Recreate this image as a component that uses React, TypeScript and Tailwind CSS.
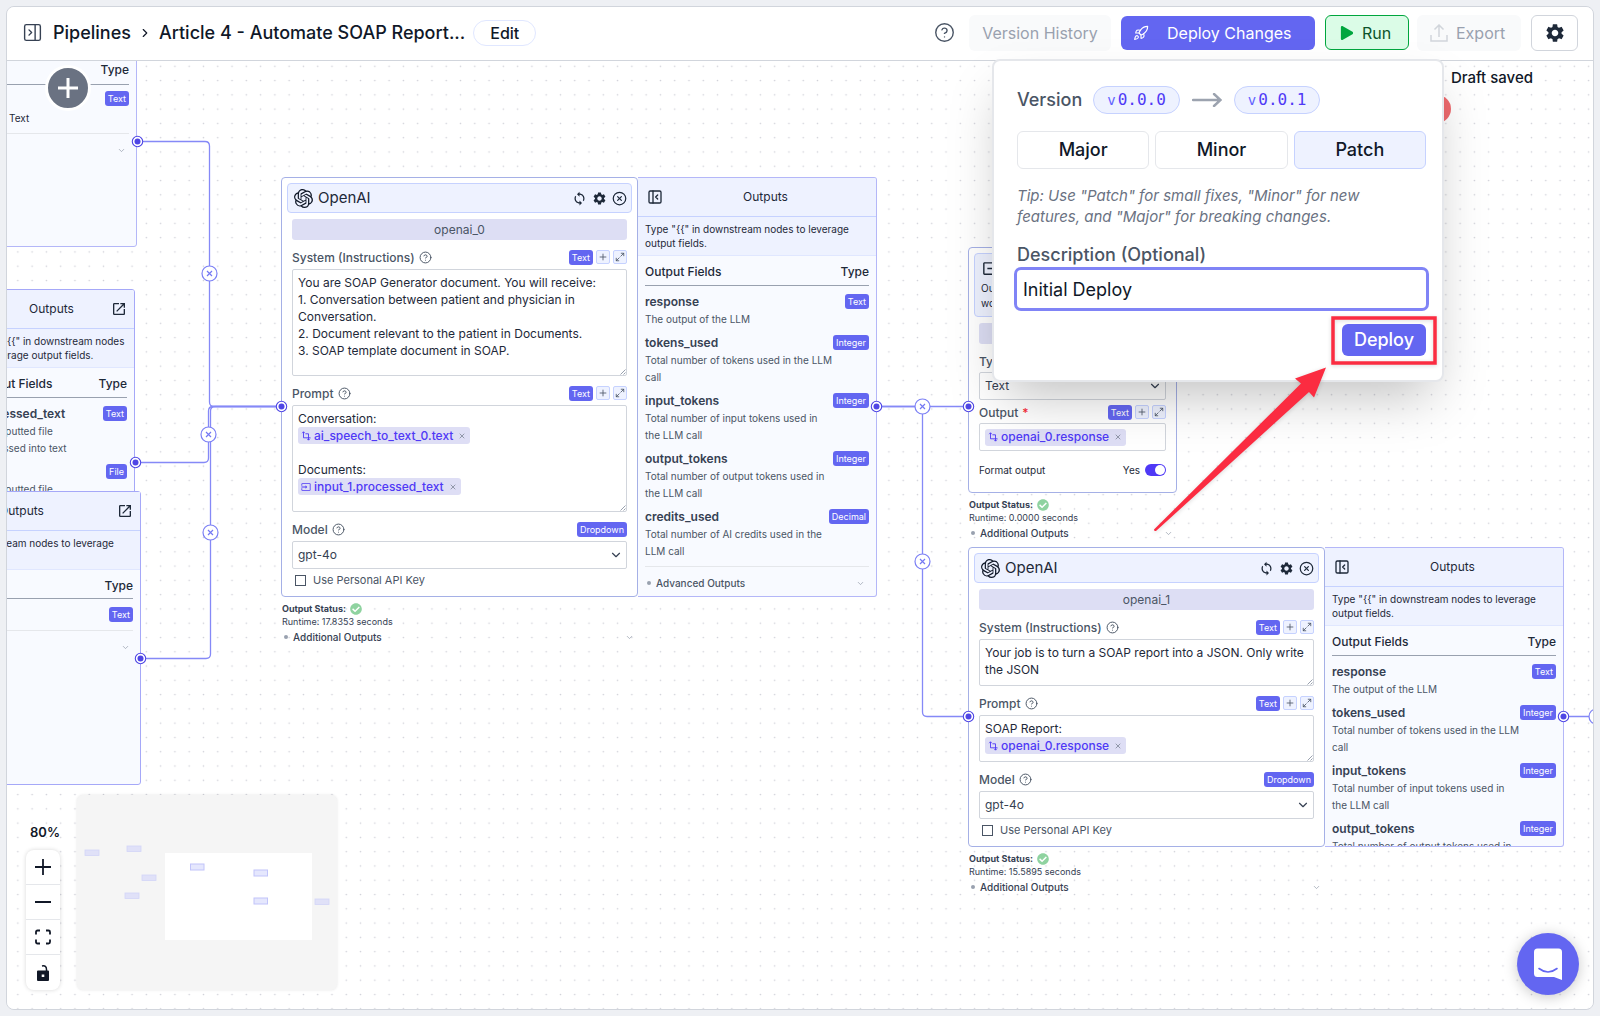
import type { ReactNode } from "react";
import {
    ChevronDown,
    ChevronRight,
    CircleHelp,
    CircleX,
    Maximize2,
    PanelLeftClose,
    PanelRightClose,
    Plus,
    Rocket,
    X,
} from "lucide-react";
import { FaCheckCircle, FaPlay } from "react-icons/fa";
import { MdInput, MdOpenInNew, MdOutput, MdSettings, MdSync } from "react-icons/md";
import { SiOpenai } from "react-icons/si";

type Field = { name: string; type: string; description: string };

const llmFields: Field[] = [
    { name: "response", type: "Text", description: "The output of the LLM" },
    {
        name: "tokens_used",
        type: "Integer",
        description: "Total number of tokens used in the LLM call",
    },
    {
        name: "input_tokens",
        type: "Integer",
        description: "Total number of input tokens used in the LLM call",
    },
    {
        name: "output_tokens",
        type: "Integer",
        description: "Total number of output tokens used in the LLM call",
    },
    {
        name: "credits_used",
        type: "Decimal",
        description: "Total number of AI credits used in the LLM call",
    },
];

const fileFields: Field[] = [
    {
        name: "processed_text",
        type: "Text",
        description: "The inputted file processed into text",
    },
    { name: "file", type: "File", description: "The inputted file" },
];

const edges = [
    "M130.5 80.5 H198 Q202.5 80.5 202.5 85 V341 Q202.5 345.5 207 345.5 H274",
    "M128.5 401.5 H197 Q201.5 401.5 201.5 397 V350 Q201.5 345.5 206 345.5 H274",
    "M133.5 597.5 H199 Q203.5 597.5 203.5 593 V350 Q203.5 345.5 208 345.5 H274",
    "M869.5 345.5 H961",
    "M869.5 345.5 H911 Q915.5 345.5 915.5 350 V651 Q915.5 655.5 920 655.5 H961",
    "M1556.5 655.5 H1590",
];

const edgeButtons = [
    [202, 212],
    [201, 373],
    [203, 471],
    [915, 345],
    [915, 500],
    [1589, 655],
];

const handles = [
    [130, 80],
    [128, 401],
    [133, 597],
    [274, 345],
    [869, 345],
    [961, 345],
    [961, 655],
    [1556, 655],
];

function Badge({ children }: { children: ReactNode }) {
    return (
        <span className="flex h-[15px] items-center rounded-[3px] bg-[#6366f1] px-[3px] text-[9px] leading-none text-white">
            {children}
        </span>
    );
}

function FieldLabel({
    htmlFor,
    id,
    text,
    badge,
    required,
    tools,
}: {
    htmlFor?: string;
    id?: string;
    text: string;
    badge: string;
    required?: boolean;
    tools?: boolean;
}) {
    return (
        <div className="flex h-[15px] items-center justify-between">
            <div className="flex items-center gap-1 text-xs font-medium text-gray-600">
                <label htmlFor={htmlFor} id={id}>
                    {text}
                    {required && <span className="ml-1 text-red-500">*</span>}
                </label>
                {!required && <CircleHelp size={13} strokeWidth={1.8} />}
            </div>
            <div className="flex gap-[3px]">
                <Badge>{badge}</Badge>
                {tools && (
                    <>
                        <button
                            aria-label="Add variable"
                            className="flex size-[14px] items-center justify-center rounded-[2px] border border-indigo-200 bg-indigo-50 text-gray-600"
                        >
                            <Plus size={10} strokeWidth={2} />
                        </button>
                        <button
                            aria-label="Expand"
                            className="flex size-[14px] items-center justify-center rounded-[2px] border border-indigo-200 bg-indigo-50 text-gray-600"
                        >
                            <Maximize2 size={10} strokeWidth={2} />
                        </button>
                    </>
                )}
            </div>
        </div>
    );
}

function Grip() {
    return (
        <svg
            className="pointer-events-none absolute right-px bottom-px text-gray-400"
            width="6"
            height="6"
            stroke="currentColor"
        >
            <path d="M0.5 5.5 L5.5 0.5 M3.5 5.5 L5.5 3.5" />
        </svg>
    );
}

function Chip({ text, input }: { text: string; input?: boolean }) {
    return (
        <span className="inline-flex h-[17px] items-center rounded-[3px] bg-[#dedef5] pr-1 pl-[3px] font-medium text-indigo-600">
            {input ? (
                <MdInput size={10} />
            ) : (
                <svg width="10" height="10" viewBox="0 0 10 10" fill="none" stroke="currentColor" strokeWidth="0.9">
                    <path d="M2.5 0.8 V6.8 H9.5 M4.5 2.8 H7.5 V9 M6.2 7.8 L7.5 9.2 L8.8 7.8 M1.2 2.2 L2.5 0.8 L3.8 2.2" />
                </svg>
            )}
            <span className="ml-[3px]">{text}</span>
            <X size={8} strokeWidth={2} className="ml-[5px] text-gray-500" />
        </span>
    );
}

function Select({ id, value }: { id: string; value: string }) {
    return (
        <div className="relative">
            <select
                id={id}
                defaultValue={value}
                className="block h-7 w-full appearance-none rounded-[2px] border border-gray-300 bg-white px-[5px] text-xs text-gray-700"
            >
                <option>{value}</option>
            </select>
            <ChevronDown
                size={14}
                strokeWidth={2}
                className="pointer-events-none absolute top-[7px] right-1 text-gray-700"
            />
        </div>
    );
}

function NodeStatus({ runtime }: { runtime: string }) {
    return (
        <div className="mt-[5px] pl-px text-[9px] text-gray-700">
            <div className="flex h-[14px] items-center gap-1 font-bold">
                Output Status: <FaCheckCircle size={12} className="text-[#8fd3a0]" />
            </div>
            <div className="h-3 leading-3">Runtime: {runtime} seconds</div>
            <div className="flex h-[18px] items-center text-[10px] font-medium">
                <span className="mr-[5px] ml-[2px] size-1 rounded-full bg-gray-400" />
                Additional Outputs
                <ChevronDown size={9} className="mr-1 ml-auto text-gray-400" />
            </div>
        </div>
    );
}

function FieldTable({ fields }: { fields: Field[] }) {
    return (
        <table className="mx-[7px] w-[calc(100%-14px)] table-fixed text-left">
            <thead>
                <tr className="h-[29px] border-b border-gray-400 text-xs text-gray-800">
                    <th className="pt-1 font-medium whitespace-nowrap">Output Fields</th>
                    <th className="w-9 pt-1 text-right font-medium">Type</th>
                </tr>
            </thead>
            <tbody>
                {fields.map((field, i) => (
                    <tr key={field.name} className="align-top">
                        <td className={i === 0 ? "pt-[7px] pb-[6px]" : "pb-[6px]"}>
                            <div className="text-xs leading-[18px] font-semibold text-gray-700">
                                {field.name}
                            </div>
                            <div className="text-[10px] leading-[17px] text-gray-600">
                                {field.description}
                            </div>
                        </td>
                        <td className={i === 0 ? "pt-2" : "pt-px"}>
                            <div className="flex justify-end">
                                <Badge>{field.type}</Badge>
                            </div>
                        </td>
                    </tr>
                ))}
            </tbody>
        </table>
    );
}

function OutputsHeader({ collapsible }: { collapsible?: boolean }) {
    return collapsible ? (
        <div className="flex h-[39px] items-center border-b border-indigo-200 bg-[#eef2ff] pr-2 pl-[9px]">
            <button aria-label="Collapse outputs">
                <PanelLeftClose size={16} strokeWidth={2} />
            </button>
            <h3 className="flex-1 text-center text-xs">Outputs</h3>
        </div>
    ) : (
        <div className="grid h-[39px] grid-cols-[20px_1fr_20px] items-center border-b border-indigo-200 bg-[#eef2ff] px-[7px]">
            <h3 className="col-start-2 text-center text-xs">Outputs</h3>
            <button aria-label="Expand outputs" className="justify-self-end">
                <MdOpenInNew size={16} />
            </button>
        </div>
    );
}

function OutputsHint() {
    return (
        <p className="h-[39px] border-b border-indigo-100 bg-[#eef2ff] px-[7px] pt-[5px] text-[10px] leading-[14px]">
            Type "{"{{"}" in downstream nodes to leverage output fields.
        </p>
    );
}

function OpenAiNode({
    name,
    system,
    runtime,
    className,
    editorClass,
    children,
}: {
    name: string;
    system: string;
    runtime: string;
    className: string;
    editorClass: string;
    children: ReactNode;
}) {
    return (
        <article className={`absolute w-[596px] text-gray-800 ${className}`}>
            <div className="flex">
                <section className="w-[357px] rounded-[4px] border border-[#a5b0e6] bg-white p-[5px] pb-2">
                    <header className="flex h-[30px] items-center rounded-[4px] border border-indigo-200 bg-[#eef2ff] pr-1 pl-[6px]">
                        <SiOpenai size={19} className="text-gray-900" />
                        <h2 className="ml-[5px] flex-1 text-[15px]">OpenAI</h2>
                        <div className="flex items-center gap-[5px]">
                            <button aria-label="Refresh">
                                <MdSync size={15} />
                            </button>
                            <button aria-label="Settings">
                                <MdSettings size={15} />
                            </button>
                            <button aria-label="Remove">
                                <CircleX size={15} strokeWidth={2} />
                            </button>
                        </div>
                    </header>
                    <div className="mt-[6px] px-[5px]">
                        <div className="mb-[10px] h-[21px] rounded-[3px] bg-[#dddef4] text-center text-xs leading-[21px] text-gray-600">
                            {name}
                        </div>
                        <FieldLabel
                            htmlFor={`${name}-system`}
                            text="System (Instructions)"
                            badge="Text"
                            tools
                        />
                        <div className="relative mt-1 mb-[10px]">
                            <textarea
                                id={`${name}-system`}
                                defaultValue={system}
                                className={`block w-full resize-none overflow-hidden rounded-[2px] border border-gray-300 px-[5px] py-1 text-xs leading-[17px] ${editorClass}`}
                            />
                            <Grip />
                        </div>
                        <FieldLabel id={`${name}-prompt`} text="Prompt" badge="Text" tools />
                        <div className="relative mt-1 mb-[10px]">
                            <div
                                role="textbox"
                                aria-labelledby={`${name}-prompt`}
                                tabIndex={0}
                                className={`rounded-[2px] border border-gray-300 px-[5px] py-1 text-xs leading-[17px] ${editorClass}`}
                            >
                                {children}
                            </div>
                            <Grip />
                        </div>
                        <FieldLabel htmlFor={`${name}-model`} text="Model" badge="Dropdown" />
                        <div className="mt-1">
                            <Select id={`${name}-model`} value="gpt-4o" />
                        </div>
                        <label className="mt-[3px] flex h-4 items-center gap-[7px] pl-[3px] text-[11px] text-gray-600">
                            <input
                                type="checkbox"
                                className="size-[11px] appearance-none border border-gray-600 bg-white"
                            />
                            Use Personal API Key
                        </label>
                    </div>
                </section>
                <aside className="flex-1 overflow-hidden rounded-r-[3px] border border-l-0 border-[#b4b7f8] bg-[#f8faff] contain-size">
                    <OutputsHeader collapsible />
                    <OutputsHint />
                    <FieldTable fields={llmFields} />
                    <div className="mx-[7px] flex h-[34px] items-center border-t border-gray-200 pl-[2px] text-[10px] font-medium text-gray-600">
                        <span className="mr-[5px] size-1 rounded-full bg-gray-400" />
                        Advanced Outputs
                        <ChevronDown size={9} className="mr-1 ml-auto text-gray-400" />
                    </div>
                </aside>
            </div>
            <div className="w-[357px]">
                <NodeStatus runtime={runtime} />
            </div>
        </article>
    );
}

function OutputNode() {
    return (
        <article className="absolute top-[186px] left-[961px] w-[209px] text-gray-800">
            <section className="rounded-[4px] border border-[#a5b0e6] bg-white p-[5px] pb-[14px]">
                <header className="h-[64px] rounded-[4px] border border-indigo-200 bg-[#eef2ff] px-[6px] pt-[5px]">
                    <h2 className="flex items-center gap-[5px] text-[15px] leading-[18px]">
                        <MdOutput size={17} /> Output
                    </h2>
                    <p className="mt-1 text-[10px] leading-[15px]">
                        Output different data types from your workflow.
                    </p>
                </header>
                <div className="mt-[6px] px-[5px]">
                    <div className="h-[21px] rounded-[3px] bg-[#dddef4] text-center text-xs leading-[21px] text-gray-600">
                        output_0
                    </div>
                    <div className="mt-[10px]">
                        <FieldLabel htmlFor="output-type" text="Type" badge="Dropdown" />
                    </div>
                    <div className="mt-[3px]">
                        <Select id="output-type" value="Text" />
                    </div>
                    <div className="mt-[5px]">
                        <FieldLabel id="output-value" text="Output" badge="Text" required tools />
                    </div>
                    <div
                        role="textbox"
                        aria-labelledby="output-value"
                        tabIndex={0}
                        className="mt-[3px] flex h-[28px] items-center rounded-[2px] border border-gray-300 px-[5px] text-xs"
                    >
                        <Chip text="openai_0.response" />
                    </div>
                    <label className="mt-[11px] flex h-4 items-center text-[10px]">
                        Format output
                        <span className="ml-auto">Yes</span>
                        <input
                            type="checkbox"
                            role="switch"
                            defaultChecked
                            className="ml-[5px] flex h-3 w-[21px] appearance-none items-center justify-end rounded-full bg-indigo-600 px-px after:size-[10px] after:rounded-full after:bg-white after:content-['']"
                        />
                    </label>
                </div>
            </section>
            <NodeStatus runtime="0.0000" />
        </article>
    );
}

function SidePanels() {
    return (
        <>
            <aside className="absolute top-[-60px] left-[-109px] h-[246px] w-[239px] rounded-[3px] border border-[#b4b7f8] bg-[#f8faff] px-[7px] pt-[58px] text-gray-800">
                <div className="flex h-[25px] items-center justify-end border-b border-gray-400 pb-1 text-xs font-medium">
                    Type
                </div>
                <div className="mt-[6px] flex justify-end">
                    <Badge>Text</Badge>
                </div>
                <p className="mt-1 h-6 border-b border-gray-200 pl-[103px] text-[10px] leading-4">Text</p>
                <ChevronDown size={9} className="mt-3 mr-[3px] ml-auto text-gray-400" />
            </aside>
            <aside className="absolute top-[228px] left-[-39px] h-[203px] w-[167px] overflow-hidden rounded-t-[3px] border border-[#a5a8f8] bg-[#f8faff] text-gray-800">
                <OutputsHeader />
                <OutputsHint />
                <FieldTable fields={fileFields} />
            </aside>
            <aside className="absolute top-[430px] left-[-105px] h-[294px] w-[239px] rounded-[3px] border border-[#a5a8f8] bg-[#f8faff] text-gray-800">
                <OutputsHeader />
                <OutputsHint />
                <div className="mx-[7px] flex h-[29px] items-center justify-end border-b border-gray-400 pt-1 text-xs font-medium">
                    Type
                </div>
                <div className="mx-[7px] flex h-8 items-center justify-end border-b border-gray-200">
                    <Badge>Text</Badge>
                </div>
                <ChevronDown size={9} className="mt-3 mr-[10px] ml-auto text-gray-400" />
            </aside>
        </>
    );
}

function Connections() {
    return (
        <svg className="pointer-events-none absolute inset-0 size-full" fill="none">
            {edges.map((d) => (
                <path key={d} d={d} stroke="#8589f7" strokeWidth="1.3" />
            ))}
            {edgeButtons.map(([x, y]) => (
                <g key={`${x}-${y}`} transform={`translate(${x + 0.5} ${y + 0.5})`}>
                    <circle r="7.5" fill="white" stroke="#7c80f5" strokeWidth="1.2" />
                    <path d="M-2.5 -2.5 L2.5 2.5 M2.5 -2.5 L-2.5 2.5" stroke="#7478f3" strokeWidth="1.2" />
                </g>
            ))}
            {handles.map(([x, y]) => (
                <g key={`${x}-${y}`} transform={`translate(${x + 0.5} ${y + 0.5})`}>
                    <circle r="5.2" fill="white" stroke="#4f46e5" strokeWidth="1.1" />
                    <circle r="3" fill="#4f46e5" />
                </g>
            ))}
        </svg>
    );
}

function Controls() {
    return (
        <div className="absolute bottom-[19px] left-[19px] flex items-end gap-[17px]">
            <div>
                <div className="mb-[10px] pl-1 text-[13px] leading-4 font-semibold text-gray-900">80%</div>
                <div className="flex w-[34px] flex-col divide-y divide-gray-200 overflow-hidden rounded-lg bg-white shadow-[0_0_4px_rgba(0,0,0,0.16)]">
                    <button aria-label="Zoom in" className="flex h-[35px] items-center justify-center">
                        <svg width="16" height="16" stroke="#111827" strokeWidth="1.8">
                            <path d="M0 8 H16 M8 0 V16" />
                        </svg>
                    </button>
                    <button aria-label="Zoom out" className="flex h-[35px] items-center justify-center">
                        <svg width="16" height="16" stroke="#111827" strokeWidth="1.8">
                            <path d="M0 8 H16" />
                        </svg>
                    </button>
                    <button aria-label="Fit view" className="flex h-[35px] items-center justify-center">
                        <svg width="16" height="16" fill="none" stroke="#111827" strokeWidth="1.8">
                            <path d="M1 5.5 V3 Q1 1.5 2.5 1.5 H5 M11 1.5 H13.5 Q15 1.5 15 3 V5.5 M15 10.5 V13 Q15 14.5 13.5 14.5 H11 M5 14.5 H2.5 Q1 14.5 1 13 V10.5" />
                        </svg>
                    </button>
                    <button aria-label="Lock" className="flex h-[35px] items-center justify-center">
                        <svg width="14" height="16" viewBox="0 0 14 16">
                            <path d="M6 1 Q10.5 0 10.5 4.5 V6" fill="none" stroke="#111827" strokeWidth="1.5" />
                            <path
                                fillRule="evenodd"
                                fill="#111827"
                                d="M2 5.5 H12 Q13 5.5 13 6.5 V15 Q13 16 12 16 H2 Q1 16 1 15 V6.5 Q1 5.5 2 5.5 Z M5.7 9.4 V12 H8.3 V9.4 Z"
                            />
                        </svg>
                    </button>
                </div>
            </div>
            <svg
                width="260"
                height="195"
                className="rounded-md bg-[#f5f5f5] shadow-[0_0_3px_rgba(0,0,0,0.1)]"
            >
                <rect x="88" y="58" width="147" height="87" fill="white" />
                <g fill="#e0e1f8" stroke="#d3d5f7" strokeWidth="0.8">
                    <rect x="8" y="55" width="14" height="5.5" />
                    <rect x="50" y="51" width="14" height="5.5" />
                    <rect x="65" y="80" width="14" height="5.5" />
                    <rect x="48" y="98" width="14" height="5.5" />
                    <rect x="238" y="104" width="14" height="5.5" />
                </g>
                <g fill="#e5e7fd" stroke="#c1c4fa" strokeWidth="1">
                    <rect x="113.5" y="69" width="13.5" height="6" />
                    <rect x="177" y="75" width="13.5" height="6" />
                    <rect x="177" y="103" width="13.5" height="6" />
                </g>
            </svg>
        </div>
    );
}

function Canvas() {
    return (
        <div className="relative flex-1 overflow-hidden bg-white">
            <svg className="absolute inset-0 size-full">
                <pattern
                    id="dots"
                    x="3.7"
                    y="-1.9"
                    width="14.28"
                    height="14.28"
                    patternUnits="userSpaceOnUse"
                >
                    <circle cx="7.14" cy="7.14" r="0.8" fill="#cfd0d8" />
                </pattern>
                <rect width="100%" height="100%" fill="url(#dots)" />
            </svg>
            <SidePanels />
            <OpenAiNode
                className="top-[116px] left-[274px]"
                name="openai_0"
                runtime="17.8353"
                editorClass="h-[107px]"
                system={
                    "You are SOAP Generator document. You will receive:\n1. Conversation between patient and physician in Conversation.\n2. Document relevant to the patient in Documents.\n3. SOAP template document in SOAP."
                }
            >
                <div>Conversation:</div>
                <div className="flex">
                    <Chip text="ai_speech_to_text_0.text" />
                </div>
                <div className="mt-[17px]">Documents:</div>
                <div className="flex">
                    <Chip text="input_1.processed_text" input />
                </div>
            </OpenAiNode>
            <OutputNode />
            <OpenAiNode
                className="top-[486px] left-[961px]"
                name="openai_1"
                runtime="15.5895"
                editorClass="h-[47px]"
                system="Your job is to turn a SOAP report into a JSON. Only write the JSON"
            >
                <div>SOAP Report:</div>
                <div className="flex">
                    <Chip text="openai_0.response" />
                </div>
            </OpenAiNode>
            <Connections />
            <button
                aria-label="Add node"
                className="absolute top-[4px] left-[38px] flex size-[46px] items-center justify-center rounded-full border-[3px] border-white bg-gray-500"
            >
                <svg width="20" height="20" stroke="white" strokeWidth="3">
                    <path d="M0 10 H20 M10 0 V20" />
                </svg>
            </button>
            <Controls />
            <span className="absolute top-[34px] right-[142px] size-[28px] rounded-full bg-[#ef6a6e]" />
            <p className="absolute top-[7px] right-[60px] text-[15px] leading-5 font-medium text-gray-900">
                Draft saved
            </p>
            <button
                aria-label="Open chat"
                className="absolute right-[14px] bottom-[14px] flex size-[62px] items-center justify-center rounded-full bg-[#6366f1] shadow-[0_2px_14px_rgba(0,0,0,0.22)]"
            >
                <svg width="28" height="32" viewBox="0 0 28 32">
                    <path
                        fill="white"
                        d="M3.5 0.5 H24.5 Q28 0.5 28 4 V32 L20 29 H3.5 Q0 29 0 25.5 V4 Q0 0.5 3.5 0.5 Z"
                    />
                    <path
                        d="M5 20.5 Q14 27.5 23 20.5"
                        fill="none"
                        stroke="#6366f1"
                        strokeWidth="1.6"
                        strokeLinecap="round"
                    />
                </svg>
            </button>
        </div>
    );
}

function VersionPill({ version }: { version: string }) {
    return (
        <span className="flex h-7 items-center gap-[2px] rounded-full border border-indigo-200 bg-indigo-50 px-[13px] font-['DejaVu_Sans_Mono',monospace] text-base text-indigo-600">
            <span className="text-sm text-indigo-500">v</span>
            {version}
        </span>
    );
}

function DeployPopover() {
    return (
        <div
            role="dialog"
            aria-label="Deploy changes"
            className="absolute top-[52px] right-[149px] z-20 w-[452px] rounded-lg border-2 border-gray-200 bg-white pt-[25px] pr-4 pb-6 pl-[23px] text-lg text-gray-900 shadow-2xl"
        >
            <div className="flex items-center">
                <span className="mr-[11px] font-medium text-gray-600">Version</span>
                <VersionPill version="0.0.0" />
                <svg className="mx-3" width="30" height="14" fill="none" stroke="#9ca3af" strokeWidth="2.4">
                    <path d="M1 7 H28 M22 1 L28.5 7 L22 13" strokeLinecap="round" />
                </svg>
                <VersionPill version="0.0.1" />
            </div>
            <div className="mt-[17px] grid grid-cols-3 gap-[6px] font-medium">
                <button className="h-[38px] rounded-md border border-gray-200">Major</button>
                <button className="h-[38px] rounded-md border border-gray-200">Minor</button>
                <button className="h-[38px] rounded-md border border-indigo-200 bg-[#eef2ff]">Patch</button>
            </div>
            <p className="mt-4 w-[360px] text-[15px] leading-[21px] text-gray-500 italic">
                Tip: Use "Patch" for small fixes, "Minor" for new features, and "Major" for breaking changes.
            </p>
            <label htmlFor="description" className="mt-4 block leading-6 font-medium text-gray-600">
                Description (Optional)
            </label>
            <input
                id="description"
                defaultValue="Initial Deploy"
                className="mt-[3px] block h-[38px] w-full rounded-[4px] bg-white px-[6px] ring-[3px] ring-[#8084f6] outline-none"
            />
            <div className="mt-4 flex justify-end">
                <button className="h-8 rounded-md bg-[#6366f1] px-3 font-medium text-white">Deploy</button>
            </div>
            <svg
                className="pointer-events-none absolute top-0 left-0 overflow-visible drop-shadow-sm"
                width="448"
                height="318"
            >
                <rect x="339" y="257" width="102" height="45" fill="none" stroke="#fb2c41" strokeWidth="3.5" />
                <path
                    fill="#fb2c41"
                    d="M160 468.5 L307 322.5 L301 317.5 L332 306.5 L320 336.5 L315 331 L162 470 Q160 470.5 160 468.5 Z"
                />
            </svg>
        </div>
    );
}

function Header() {
    return (
        <header className="flex h-[54px] shrink-0 items-center border-b border-gray-300 bg-white pr-[15px] pb-[2px] pl-[15px] text-base text-gray-900">
            <button aria-label="Open sidebar">
                <PanelRightClose size={21} strokeWidth={1.6} className="text-gray-700" />
            </button>
            <nav className="ml-[10px] flex items-center text-lg font-medium">
                <a href="#pipelines">Pipelines</a>
                <ChevronRight size={14} className="mx-[7px]" />
                <span>Article 4 - Automate SOAP Report...</span>
            </nav>
            <button className="ml-2 h-[26px] rounded-full border border-indigo-100 px-4 font-medium">
                Edit
            </button>
            <div className="ml-auto flex items-center">
                <button aria-label="Help">
                    <CircleHelp size={21} strokeWidth={1.6} className="text-gray-600" />
                </button>
                <button disabled className="ml-[14px] h-9 w-[142px] rounded-md bg-gray-50 text-gray-400">
                    Version History
                </button>
                <button className="ml-[10px] flex h-[34px] w-[194px] items-center rounded-md bg-[#6366f1] text-white">
                    <Rocket size={16} strokeWidth={1.7} className="ml-3" />
                    <span className="ml-[18px]">Deploy Changes</span>
                </button>
                <button className="ml-[10px] flex h-[35px] w-[84px] items-center rounded-md border border-green-600 bg-green-100 pl-[14px] text-green-900">
                    <FaPlay size={14} className="mr-2 text-green-600" />
                    Run
                </button>
                <button
                    disabled
                    className="ml-2 flex h-9 w-[104px] items-center rounded-md bg-gray-50 pl-[13px] text-gray-400"
                >
                    <svg
                        width="18"
                        height="18"
                        fill="none"
                        stroke="#d1d5db"
                        strokeWidth="1.5"
                        className="mr-2"
                    >
                        <path d="M1 11 V17 H17 V11 M9 13 V1.5 M4.5 5.5 L9 1 L13.5 5.5" />
                    </svg>
                    Export
                </button>
                <button
                    aria-label="Settings"
                    className="ml-[10px] flex h-9 w-[47px] items-center justify-center rounded-md border border-gray-300 text-gray-800"
                >
                    <MdSettings size={22} />
                </button>
            </div>
        </header>
    );
}

export default function App() {
    return (
        <div className="flex min-h-screen bg-[#eef0f4] p-[6px] font-[Inter,sans-serif]">
            <main className="relative flex flex-1 flex-col overflow-hidden rounded-lg border border-gray-300">
                <Header />
                <Canvas />
                <DeployPopover />
            </main>
        </div>
    );
}
